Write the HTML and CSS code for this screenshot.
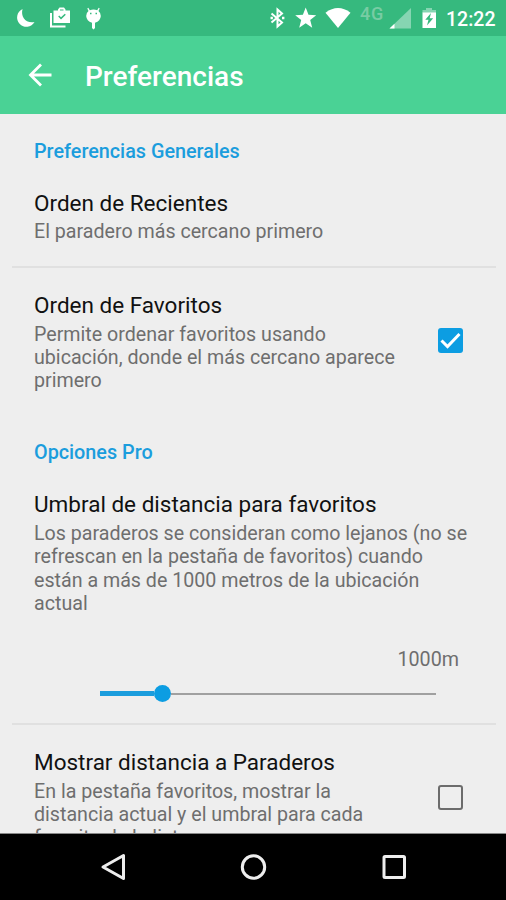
FILE: index.html
```html
<!DOCTYPE html>
<html lang="es">
<head>
  <meta charset="UTF-8" />
  <meta name="viewport" content="width=device-width, initial-scale=1.0"/>
  <title>Preferencias</title>
  <link rel="stylesheet" href="styles.css">
</head>
<body>
  <div class="screen">
    <div class="status-bar">
      <svg class="status-left" width="110" height="36" viewBox="0 0 110 36">
        <path d="M22.500 9A9.300 9.300 0 1 0 34.500 22C25.500 23.500 20.500 17 22.500 9Z" />
        <path d="M50 13H52V25.500H65.500V27.500H50Z" />
        <path fill-rule="evenodd" d="M53.500 10.500H58V9.500L59.500 7.500H64L65.500 9.500V10.500H70V23H53.500ZM60 10.500H63.500V9.500H60ZM58.200 16.500L61 19.500L65.800 14.800L64.800 13.700L61 17.300L59.200 15.500Z" />
        <path fill-rule="evenodd" d="M88.300 7.800L89.800 10.200Q93.500 8.800 97.200 10.200L98.700 7.800L99.700 8.500L98.500 11Q101 13 100.800 16Q100.500 21 95 22.700V28L93.500 29.500L92 28V22.700Q86.500 21 86.200 16Q86 13 88.500 11L87.300 8.500ZM90 12.800V14.300H91.500V12.800ZM95.500 12.800V14.300H97V12.800Z" />
      </svg>
      <div class="status-right">
        <svg width="236" height="36" viewBox="270 0 236 36">
          <path class="line" d="M271.500 13.500L282 22.500L277.500 26.500V9.500L282 13.500L271.500 22.500" />
          <path d="M270.500 16.800h2.400v2.400h-2.400zM282 16.800h2.400v2.400h-2.400z" />
          <path d="M305.700 7.500L308.500 14.800L316.200 15.200L310.200 20L312.200 27.700L305.700 23.300L299.200 27.700L301.200 20L295.200 15.200L302.900 14.800Z" />
          <path d="M325.500 12.700Q338 3.500 350.500 12.700L338 28Z" />
          <text class="network" x="360" y="19.500">4G</text>
          <path class="faded" d="M411 8V28.500H389.500Z" />
          <path d="M394.500 23.700V28.500H389.500Z" />
          <path class="faded" d="M426 8H432V10H436V13H422.500V10H426Z" />
          <path fill-rule="evenodd" d="M422.500 12.500H436V28H422.500ZM431 13L425.300 19.800H428.500L427 25.500L433.200 18.300H429.700Z" />
          <text class="clock" x="446" y="26">12:22</text>
        </svg>
      </div>
    </div>

    <div class="toolbar">
      <svg class="back" width="24" height="24" viewBox="0 0 24 24">
        <path d="M23.500 12H2.500M13 1.500L2.500 12L13 22.500" />
      </svg>
      <h1>Preferencias</h1>
    </div>

    <div class="content">
      <h2 class="category">Preferencias Generales</h2>
      <div class="preference">
        <div class="text">
          <div class="title">Orden de Recientes</div>
          <div class="summary single">El paradero más cercano primero</div>
        </div>
      </div>
      <div class="divider"></div>
      <div class="preference">
        <div class="text">
          <div class="title">Orden de Favoritos</div>
          <div class="summary">Permite ordenar favoritos usando<br>ubicación, donde el más cercano aparece<br>primero</div>
        </div>
        <div class="checkbox checked">
          <svg width="25" height="25" viewBox="0 0 25 25"><path d="M3.500 12.500L9.500 18.500L21.500 6" /></svg>
        </div>
      </div>

      <h2 class="category">Opciones Pro</h2>
      <div class="preference slider-preference">
        <div class="text">
          <div class="title">Umbral de distancia para favoritos</div>
          <div class="summary">Los paraderos se consideran como lejanos (no se<br>refrescan en la pestaña de favoritos) cuando<br>están a más de 1000 metros de la ubicación<br>actual</div>
          <div class="value">1000m</div>
          <div class="slider">
            <div class="progress"></div>
            <div class="thumb"></div>
            <div class="track"></div>
          </div>
        </div>
      </div>
      <div class="divider"></div>
      <div class="preference">
        <div class="text">
          <div class="title">Mostrar distancia a Paraderos</div>
          <div class="summary">En la pestaña favoritos, mostrar la<br>distancia actual y el umbral para cada<br>favorito de la lista</div>
        </div>
        <div class="checkbox"></div>
      </div>
    </div>

    <div class="nav-bar">
      <svg width="506" height="66" viewBox="0 0 506 66">
        <path d="M123.500 21.500V44.500L103 33Z" />
        <circle cx="253.500" cy="33" r="11.200" />
        <rect x="384" y="22.500" width="20.500" height="21" rx="1" />
      </svg>
    </div>
  </div>
</body>
</html>
```
FILE: styles.css
```css
body {
  margin: 0;
  background-color: #eeeeee;
  font-family: Roboto, sans-serif;
}

.screen {
  display: flex;
  flex-direction: column;
  width: 506px;
  height: 900px;
  overflow: hidden;
}

.status-bar {
  display: flex;
  justify-content: space-between;
  flex: none;
  height: 36px;
  background-color: #36b97e;
  fill: #fff;
}

.status-bar svg {
  display: block;
}

.line {
  fill: none;
  stroke: #fff;
  stroke-width: 2;
}

.faded {
  fill: #86d5b2;
}

.network {
  font-size: 18px;
  font-weight: 500;
  letter-spacing: 0.8px;
  fill: #78cca4;
}

.clock {
  font-size: 19.5px;
  font-weight: 500;
}

.toolbar {
  display: flex;
  align-items: center;
  flex: none;
  box-sizing: border-box;
  height: 78px;
  padding-left: 28px;
  background-color: #4ad295;
}

.back {
  fill: none;
  stroke: #fff;
  stroke-width: 2.8;
}

h1 {
  margin: 3px 0 0 33px;
  font-size: 28px;
  font-weight: 500;
  color: #fff;
}

.content {
  flex: 1;
  min-height: 0;
  overflow: hidden;
  border-bottom: 1px solid #888;
}

.category {
  margin: 0;
  padding: 26px 34px 0;
  font-size: 19.8px;
  font-weight: 500;
  line-height: 24px;
  color: #1b9ddd;
}

.preference {
  display: flex;
  align-items: center;
  justify-content: space-between;
  padding: 23px 43px 23px 34px;
}

.category + .preference {
  padding: 25px 34px 23px;
}

.category + .slider-preference {
  padding-bottom: 20px;
}

.title {
  margin-bottom: 3px;
  font-size: 22.5px;
  line-height: 29px;
  color: #111;
  white-space: nowrap;
}

.summary {
  font-size: 19.65px;
  line-height: 23.1px;
  color: #6e6e6e;
  white-space: nowrap;
}

.single {
  margin: -1px 0 0;
}

.divider {
  height: 2px;
  margin: 0 10px 0 12px;
  background-color: #e0e0e0;
}

.checkbox {
  flex: none;
  box-sizing: border-box;
  width: 25px;
  height: 25px;
  margin-bottom: 2px;
  border: 2.5px solid #6c6c6c;
  border-radius: 3px;
}

.checked {
  border: none;
  background-color: #0c9de2;
}

.checked svg {
  display: block;
  fill: none;
  stroke: #fff;
  stroke-width: 3;
}

.text {
  flex: 1;
}

.value {
  margin: 33px 13px 0 0;
  font-size: 19.7px;
  line-height: 24px;
  text-align: right;
  color: #6e6e6e;
}

.slider {
  display: flex;
  align-items: center;
  height: 18px;
  margin: 13px 36px 0 66px;
}

.progress {
  width: 54px;
  height: 5px;
  background-color: #1b9ddd;
}

.thumb {
  width: 17px;
  height: 17px;
  border-radius: 50%;
  background-color: #0c9de2;
}

.track {
  flex: 1;
  height: 2px;
  background-color: #a0a0a0;
}

.nav-bar {
  flex: none;
  height: 66px;
  background-color: #000;
}

.nav-bar svg {
  display: block;
  fill: none;
  stroke: #eee;
  stroke-width: 3;
  stroke-linejoin: round;
}
```
